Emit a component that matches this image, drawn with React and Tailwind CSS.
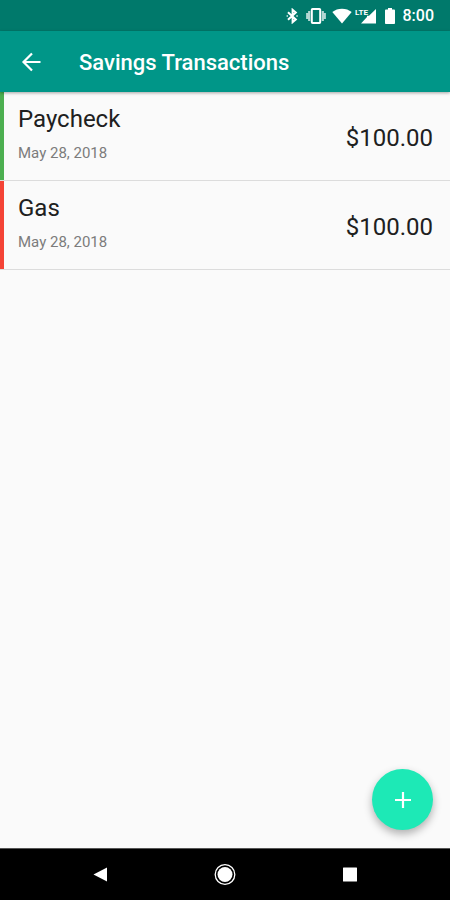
const transactions = [
  { id: 1, name: "Paycheck", date: "May 28, 2018", amount: "$100.00", type: "income" },
  { id: 2, name: "Gas", date: "May 28, 2018", amount: "$100.00", type: "expense" },
];

function StatusBar() {
  return (
    <div className="flex h-[31px] items-center justify-end bg-[#00796b] pt-px pr-4 text-white">
      <svg className="mr-2 h-4 w-3" viewBox="0 0 12 16" fill="none" stroke="currentColor" strokeWidth="2" aria-hidden="true">
        <path d="M2 4.2 9.8 11.5 6.6 14.2V1.8l3.2 2.700L2 11.8" />
        <path d="M1.2 8h.1M11 8h.1" strokeWidth="1.6" strokeLinecap="round" />
      </svg>
      <svg className="mr-1.5 h-4 w-5" viewBox="0 0 20 16" aria-hidden="true">
        <path d="M1.2 5v6M3.2 3v10M16.8 3v10M18.8 5v6" stroke="currentColor" strokeOpacity="0.7" strokeWidth="2.2" />
        <rect x="5.8" y="1" width="8.4" height="14" rx="0.8" fill="none" stroke="currentColor" strokeWidth="2" />
      </svg>
      <svg className="mr-1 h-4 w-5" viewBox="0 0 20 16" fill="currentColor" aria-hidden="true">
        <path d="M10 15.5.3 4.1C3 2 6.3.8 10 .8s7 1.2 9.7 3.3Z" />
      </svg>
      <svg className="mr-2 h-4 w-[21px] overflow-visible" viewBox="0 0 21 16" fill="currentColor" aria-hidden="true">
        <path d="M20 1v14.5H5L11 9V7.800h2Z" />
        <text x="-1" y="7" className="font-['Roboto',sans-serif] text-[8px] font-bold">
          LTE
        </text>
      </svg>
      <svg className="mr-2 h-[18px] w-2.5" viewBox="0 0 10 18" fill="currentColor" aria-hidden="true">
        <path d="M3 1h4v1.6h2.2c.4 0 .8.4.8.8v12.8c0 .4-.4.8-.8.8H.8c-.4 0-.8-.4-.8-.8V3.4c0-.4.4-.8.8-.8H3Z" />
      </svg>
      <span className="text-base leading-4 font-medium">8:00</span>
    </div>
  );
}

function AppBar() {
  return (
    <header className="relative z-10 flex h-[61px] items-center bg-[#009688] pl-5 text-white shadow-[0_1px_3px_rgba(0,0,0,0.35)]">
      <button type="button" aria-label="Back" className="grid size-6 place-items-center">
        <svg className="size-6" viewBox="0 0 24 24" fill="none" stroke="currentColor" strokeWidth="2.2" aria-hidden="true">
          <path d="M20.5 12H4M12 3.5 3.5 12l8.5 8.5" />
        </svg>
      </button>
      <h1 className="ml-[35px] pt-0.5 text-[22px] leading-6 font-medium">Savings Transactions</h1>
    </header>
  );
}

function TransactionRow({ transaction }) {
  const { name, date, amount, type } = transaction;

  return (
    <li className="flex h-[89px] border-b border-[#dcdcdc]">
      <div className={`w-1 ${type === "income" ? "bg-[#4caf50]" : "bg-[#f44336]"}`} />
      <div className="flex flex-1 justify-between pt-[11px] pr-[17px] pl-3.5">
        <div>
          <h2 className="text-2xl leading-8 text-[#202020]">{name}</h2>
          <p className="mt-1.5 text-[15px] leading-6 text-[#7c7c7c]">{date}</p>
        </div>
        <p className="pt-[19px] text-2xl leading-8 text-[#202020]">{amount}</p>
      </div>
    </li>
  );
}

function NavigationBar() {
  return (
    <nav className="border-t border-[#555] bg-black text-white">
      <div className="mx-auto grid h-[51px] w-10/12 grid-cols-3 place-items-center">
        <button type="button" aria-label="Back">
          <svg className="size-6" viewBox="0 0 24 24" fill="currentColor" aria-hidden="true">
            <path d="M19 4.5v14L5.5 11.5Z" />
          </svg>
        </button>
        <button type="button" aria-label="Home">
          <svg className="size-6" viewBox="0 0 24 24" fill="currentColor" aria-hidden="true">
            <circle cx="12" cy="11.5" r="9.8" fill="none" stroke="currentColor" strokeWidth="1.3" />
            <circle cx="12" cy="11.5" r="7.5" />
          </svg>
        </button>
        <button type="button" aria-label="Recent apps">
          <svg className="size-6" viewBox="0 0 24 24" fill="currentColor" aria-hidden="true">
            <rect x="5" y="4.5" width="14" height="14" rx="0.5" />
          </svg>
        </button>
      </div>
    </nav>
  );
}

export default function App() {
  return (
    <div className="flex min-h-screen flex-col bg-[#fafafa] font-['Roboto',sans-serif]">
      <StatusBar />
      <AppBar />
      <main className="flex flex-1 flex-col justify-between">
        <ul>
          {transactions.map((transaction) => (
            <TransactionRow key={transaction.id} transaction={transaction} />
          ))}
        </ul>
        <button
          type="button"
          aria-label="Add transaction"
          className="mr-[17px] mb-[18px] grid size-[61px] place-items-center self-end rounded-full bg-[#1de9b6] text-white shadow-[0_4px_8px_rgba(0,0,0,0.3)]"
        >
          <svg className="size-4" viewBox="0 0 16 16" stroke="currentColor" strokeWidth="2.2" aria-hidden="true">
            <path d="M8 0v16M0 8h16" />
          </svg>
        </button>
      </main>
      <NavigationBar />
    </div>
  );
}
